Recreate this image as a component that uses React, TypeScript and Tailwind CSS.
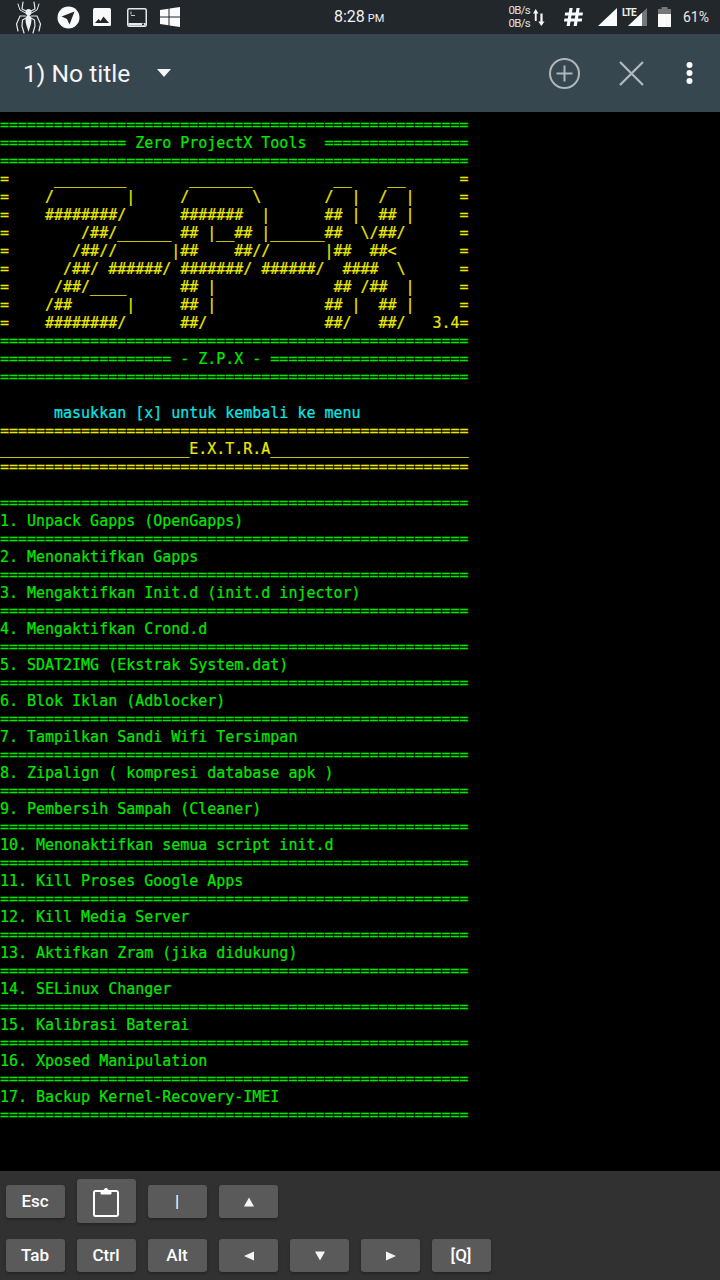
import React from "react";

const GREEN = "text-[#00ea00]";
const YELLOW = "text-[#eaea00]";
const CYAN = "text-[#00eaea]";

const bar = "=".repeat(52);

type Seg = [number, string];
function place(segs: Seg[]): string {
  let s = "";
  for (const [col, t] of segs) {
    s = s.padEnd(col, " ") + t;
  }
  return s;
}

const art: string[] = [
  place([[0, "="], [6, "________"], [21, "_______"], [37, "__"], [43, "__"], [51, "="]]),
  place([[0, "="], [5, "/"], [14, "|"], [20, "/"], [28, "\\"], [36, "/"], [39, "|"], [42, "/"], [45, "|"], [51, "="]]),
  place([[0, "="], [5, "########/"], [20, "#######"], [29, "|"], [36, "##"], [39, "|"], [42, "##"], [45, "|"], [51, "="]]),
  place([[0, "="], [9, "/##/______"], [20, "##"], [23, "|__##"], [29, "|______##"], [40, "\\/##/"], [51, "="]]),
  place([[0, "="], [8, "/##//"], [19, "|##"], [26, "##//"], [36, "|##"], [41, "##<"], [51, "="]]),
  place([[0, "="], [7, "/##/"], [12, "######/"], [20, "#######/"], [29, "######/"], [38, "####"], [44, "\\"], [51, "="]]),
  place([[0, "="], [6, "/##/____"], [20, "##"], [23, "|"], [37, "##"], [40, "/##"], [45, "|"], [51, "="]]),
  place([[0, "="], [5, "/##"], [14, "|"], [20, "##"], [23, "|"], [36, "##"], [39, "|"], [42, "##"], [45, "|"], [51, "="]]),
  place([[0, "="], [5, "########/"], [20, "##/"], [36, "##/"], [42, "##/"], [48, "3.4="]]),
];

const items = [
  "1. Unpack Gapps (OpenGapps)",
  "2. Menonaktifkan Gapps",
  "3. Mengaktifkan Init.d (init.d injector)",
  "4. Mengaktifkan Crond.d",
  "5. SDAT2IMG (Ekstrak System.dat)",
  "6. Blok Iklan (Adblocker)",
  "7. Tampilkan Sandi Wifi Tersimpan",
  "8. Zipalign ( kompresi database apk )",
  "9. Pembersih Sampah (Cleaner)",
  "10. Menonaktifkan semua script init.d",
  "11. Kill Proses Google Apps",
  "12. Kill Media Server",
  "13. Aktifkan Zram (jika didukung)",
  "14. SELinux Changer",
  "15. Kalibrasi Baterai",
  "16. Xposed Manipulation",
  "17. Backup Kernel-Recovery-IMEI",
];

function Line({ c, children }: { c: string; children?: React.ReactNode }) {
  return <div className={`h-[18px] leading-[18px] whitespace-pre ${c}`}>{children}</div>;
}

function Spider() {
  return (
    <svg width="27" height="33" viewBox="0 0 27 33" fill="none" stroke="#e8e8e8" strokeLinecap="round">
      <path d="M13.5 8c-2 0-3 1.500-3 3.500 0 2 1.500 3 3 3s3-1 3-3c0-2-1-3.500-3-3.500z" fill="#f0f0f0" stroke="none" />
      <path d="M13.500 14c-2 0-3 2-3 5 0 4 2 8 3 12 1-4 3-8 3-12 0-3-1-5-3-5z" fill="#f0f0f0" stroke="none" />
      <path d="M11 10 7 8l1-7M16 10l4-2-1-7" strokeWidth="1.200" />
      <path d="M10.500 12 5 9 3 3M16.500 12l5.500-3 2-6" strokeWidth="1" />
      <path d="M10.500 15 5 15 1.500 23l1.500 7M16.500 15l5.500 0 3.500 8-1.500 7" strokeWidth="1.200" />
      <path d="M11 17 7.500 19l-.5 6 2 7M16 17l3.500 2 .5 6-2 7" strokeWidth="1.200" />
    </svg>
  );
}

function Telegram() {
  return (
    <svg width="23" height="23" viewBox="0 0 23 23">
      <circle cx="11.500" cy="11.500" r="11" fill="#fafafa" />
      <path d="M17.500 5.500 4.500 10.500l5.500 2.500 2.500 5.500z" fill="#21272b" />
    </svg>
  );
}

function ImageIcon() {
  return (
    <svg width="18" height="18" viewBox="0 0 18 18">
      <rect width="18" height="18" rx="1.500" fill="#fafafa" />
      <path d="M2 15l3.500-4 2 2 3-4.500L16 15z" fill="#21272b" />
    </svg>
  );
}

function TermIcon() {
  return (
    <svg width="20" height="19" viewBox="0 0 20 19">
      <rect x="0.750" y="0.750" width="18.500" height="17.500" rx="1.500" fill="#21272b" stroke="#e8e8e8" strokeWidth="1.500" />
      <path d="M1.500 15h17v2.500h-17z" fill="#e8e8e8" />
      <path d="M4 3.500v3M4 7.500h4" stroke="#cccccc" strokeWidth="1" />
      <rect x="15" y="15.500" width="2" height="1.500" fill="#21272b" />
    </svg>
  );
}

function WinIcon() {
  return (
    <svg width="20" height="20" viewBox="0 0 20 20">
      <path d="M0 3 8.500 1.800V9.500H0zM9.500 1.600 20 0v9.500H9.500zM0 10.500h8.500v7.700L0 17zM9.500 10.500H20V20L9.500 18.400z" fill="#fafafa" />
    </svg>
  );
}

function Key({ children, tall }: { children: React.ReactNode; tall?: boolean }) {
  return (
    <div
      className={`w-[59px] ${tall ? "h-[44px]" : "h-[33px]"} flex items-center justify-center rounded-[3px] bg-[#5a5a5a] shadow-[0_2px_3px_rgba(0,0,0,0.25)] text-white text-[17px] font-medium pt-[1px] pr-[1px] font-['Roboto',sans-serif]`}
    >
      {children}
    </div>
  );
}

function Tri({ d }: { d: string }) {
  return (
    <svg className="ml-[1px]" width="12" height="12" viewBox="0 0 12 12">
      <path d={d} fill="#f5f5f5" />
    </svg>
  );
}

export default function App() {
  return (
    <div className="w-[720px] h-[1280px] flex flex-col bg-black overflow-hidden font-['Roboto',sans-serif]">
      {/* status bar */}
      <div className="h-[34px] shrink-0 bg-[#21272b] flex items-center text-white">
        <div className="flex items-center ml-[15px] w-[27px]"><Spider /></div>
        <div className="ml-[15px]"><Telegram /></div>
        <div className="ml-[13px]"><ImageIcon /></div>
        <div className="ml-[16px]"><TermIcon /></div>
        <div className="ml-[13px]"><WinIcon /></div>
        <div className="ml-[154px] w-[52px] whitespace-nowrap text-[16px] leading-none text-[#f2f2f2]">
          8:28<span className="text-[11px] ml-[3px]">PM</span>
        </div>
        <div className="ml-[122px] flex items-center">
          <div className="w-[22px] text-[11.5px] leading-[13px] text-[#e0e0e0] text-right whitespace-nowrap tracking-[-0.7px]">
            <div>0B/s</div>
            <div>0B/s</div>
          </div>
          <svg className="ml-[3px]" width="12" height="18" viewBox="0 0 12 18">
            <path d="M2.700 1 0 5.500h1.800V13h1.900V5.500h1.800z" fill="#f5f5f5" />
            <path d="M8.300 18 11.500 13.500H9.600V5.500H7.400V13.500H5.300z" fill="#f5f5f5" />
          </svg>
        </div>
        <svg className="ml-[19px]" width="19" height="20" viewBox="0 0 19 20" fill="#fafafa">
          <path d="M5.500 1h3.200L5.800 19H2.600zM12.500 1h3.200l-2.900 18H9.600z" />
          <path d="M1.200 5.500H19l-.5 3H.7zM.4 11.500h17.800l-.5 3H-.1z" />
        </svg>
        <svg className="ml-[15px]" width="20" height="18" viewBox="0 0 20 18">
          <path d="M19 0v18H0z" fill="#fafafa" />
        </svg>
        <div className="relative ml-[4px] w-[25px] h-[18px]">
          <span className="absolute left-0 top-0 text-[10px] leading-[9px] font-bold text-[#f0f0f0] tracking-[-0.7px]">LTE</span>
          <svg className="absolute right-0 bottom-0" width="19" height="18" viewBox="0 0 19 18">
            <path d="M19 0v18H0z" fill="#777777" />
            <path d="M14 4.700V18H0z" fill="#fafafa" />
          </svg>
        </div>
        <svg className="ml-[11px]" width="13" height="20" viewBox="0 0 13 20">
          <path d="M3.500 0h6v2H13v5H0V2h3.500z" fill="#777777" />
          <path d="M0 7h13v13H0z" fill="#fafafa" />
        </svg>
        <div className="ml-[12px] text-[14px] leading-none text-[#e8e8e8]">61%</div>
      </div>

      {/* toolbar */}
      <div className="h-[78px] shrink-0 bg-[#37474f] flex items-center text-white">
        <div className="ml-[23px] w-[107px] whitespace-nowrap text-[24.6px] leading-none text-[#f5f5f5] pt-[2px]">1) No title</div>
        <svg className="ml-[27px]" width="14" height="8" viewBox="0 0 14 8">
          <path d="M0 0h14L7 8z" fill="#f5f5f5" />
        </svg>
        <svg className="ml-[378px]" width="31" height="31" viewBox="0 0 31 31" fill="none" stroke="#b0b6b9" strokeWidth="2">
          <circle cx="15.500" cy="15.500" r="14.500" />
          <path d="M15.500 7.500v16M7.500 15.500h16" />
        </svg>
        <svg className="ml-[39px]" width="25" height="25" viewBox="0 0 25 25" fill="none" stroke="#b4babd" strokeWidth="2.200">
          <path d="M1 1l23 23M24 1 1 24" />
        </svg>
        <svg className="ml-[42px]" width="7" height="22" viewBox="0 0 7 22" fill="#fafafa">
          <circle cx="3.500" cy="3" r="3" />
          <circle cx="3.500" cy="11" r="3" />
          <circle cx="3.500" cy="19" r="3" />
        </svg>
      </div>

      {/* terminal */}
      <div className="flex-1 min-h-0 bg-black pt-[4px] font-['DejaVu_Sans_Mono',monospace] text-[14.97px] [-webkit-text-stroke:0.2px]">
        <Line c={GREEN}>{bar}</Line>
        <Line c={GREEN}>{"=".repeat(14) + " Zero ProjectX Tools  " + "=".repeat(16)}</Line>
        <Line c={GREEN}>{bar}</Line>
        {art.map((l, i) => (
          <Line key={i} c={YELLOW}>{l}</Line>
        ))}
        <Line c={GREEN}>{bar}</Line>
        <Line c={GREEN}>{"=".repeat(19) + " - Z.P.X - " + "=".repeat(22)}</Line>
        <Line c={GREEN}>{bar}</Line>
        <Line c={GREEN} />
        <Line c={CYAN}>{"      masukkan [x] untuk kembali ke menu"}</Line>
        <Line c={YELLOW}>{bar}</Line>
        <Line c={YELLOW}>{"_".repeat(21) + "E.X.T.R.A" + "_".repeat(22)}</Line>
        <Line c={YELLOW}>{bar}</Line>
        <Line c={GREEN} />
        <Line c={GREEN}>{bar}</Line>
        {items.map((t) => (
          <React.Fragment key={t}>
            <Line c={GREEN}>{t}</Line>
            <Line c={GREEN}>{bar}</Line>
          </React.Fragment>
        ))}
      </div>

      {/* extra keys */}
      <div className="h-[109px] shrink-0 bg-[#313131] px-[6px] pt-[8px] flex flex-col gap-[16px]">
        <div className="h-[44px] flex items-center gap-[12px]">
          <Key>Esc</Key>
          <Key tall>
            <svg width="26" height="31" viewBox="0 0 26 31" fill="none" stroke="#ffffff" strokeWidth="2">
              <path d="M8 5H2.500A1.500 1.500 0 0 0 1 6.500v22A1.500 1.500 0 0 0 2.500 30h21a1.500 1.500 0 0 0 1.500-1.500v-22A1.500 1.500 0 0 0 23.500 5H18" />
              <path d="M8 8V4.500h3a2 2 0 0 1 4 0h3V8z" fill="#ffffff" stroke="#ffffff" strokeWidth="1" />
            </svg>
          </Key>
          <Key><span className="text-[17px] font-normal">|</span></Key>
          <Key><Tri d="M6 1.500 11 10.500H1z" /></Key>
        </div>
        <div className="flex items-center gap-[12px]">
          <Key>Tab</Key>
          <Key>Ctrl</Key>
          <Key>Alt</Key>
          <Key><Tri d="M1 6 11 1.500v9z" /></Key>
          <Key><Tri d="M1 1.500h10L6 10.500z" /></Key>
          <Key><Tri d="M11 6 1 1.500v9z" /></Key>
          <Key>[Q]</Key>
        </div>
      </div>
    </div>
  );
}
